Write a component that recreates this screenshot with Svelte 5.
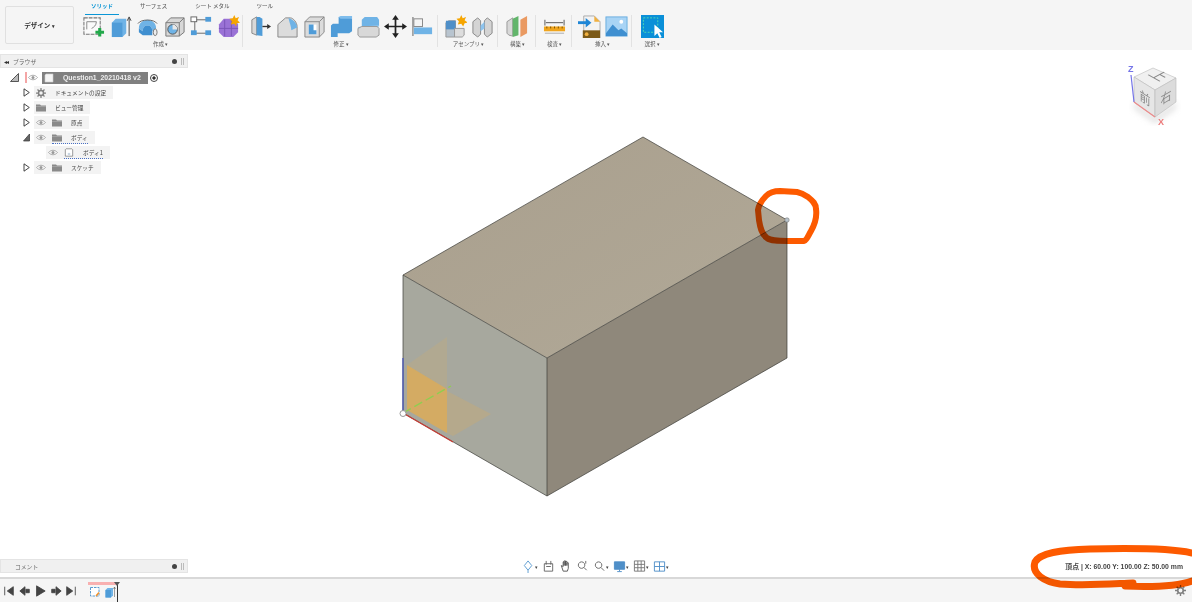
<script lang="ts">
	// 24x24 toolbar artwork, keyed by name
	const art: Record<string, string> = {
		sketch: `<path d="M2 3h17v17H2z" fill="#fafafa" stroke="#777" stroke-width="1.1" stroke-dasharray="4 1"/><path d="M5 15V7h10c0 4-3 6-5 7" fill="none" stroke="#888"/><path d="M14 18h9M18.500 13.500v9" stroke="#22a84a" stroke-width="3.200"/>`,
		extrude: `<path d="M3 8l4-4h11v15l-4 4H3z" fill="#6fb3e6"/><path d="M3 8h11v15H3z" fill="#4f9cd8"/><path d="M21 22V3M19 6l2-4 2 4" fill="none" stroke="#444" stroke-width="1"/>`,
		revolve: `<path d="M3 14c0-6 5-9 9-9s9 3 9 9l-4 3c0-4-2-6-5-6s-5 2-5 6z" fill="#6fb3e6"/><path d="M3 14l4 3v4l-4-3zM7 17c0-4 2-6 5-6s5 2 5 6v4H7z" fill="#3f8fd0"/><path d="M2 9c3-5 17-5 20 0" fill="none" stroke="#666"/><ellipse cx="20" cy="18" rx="2" ry="3.500" fill="#eee" stroke="#777"/>`,
		hole: `<path d="M3 8l5-5h14v15l-5 4H3z" fill="#d8d8d8" stroke="#777"/><path d="M3 8h14v14M17 8l5-5" fill="none" stroke="#777"/><circle cx="10" cy="15" r="5" fill="#6fb3e6" stroke="#555"/><path d="M10 15V10a5 5 0 0 1 5 5z" fill="#e8e8e8"/>`,
		pattern: `<path d="M5 5h14M5 5v14M5 19h14" stroke="#666"/><rect x="1" y="2" width="6" height="5" fill="#fff" stroke="#666"/><rect x="16" y="2" width="6" height="5" fill="#4f9cd8"/><rect x="1" y="16" width="6" height="5" fill="#4f9cd8"/><rect x="16" y="16" width="6" height="5" fill="#4f9cd8"/>`,
		form: `<path d="M2 10l5-6h12l3 6v8l-5 5H7l-5-5z" fill="#9a72d6"/><path d="M8 5v17M15 5v17M2 14h20" stroke="#7a55b8"/><path d="M18 0l1.500 3.500L23 2l-1.500 3.500L24 8l-3.500.5L20 12l-2-3-3.500 1 1-3.500L13 4l3.500-.5z" fill="#f6a500"/>`,
		press: `<path d="M3 5l5-3v19l-5-2z" fill="#d8d8d8" stroke="#888"/><path d="M8 2h3l3 2v18l-6-1z" fill="#4f9cd8"/><path d="M14 12h7" stroke="#333" stroke-width="1.400"/><path d="M19 9.500l4 2.500-4 2.500z" fill="#333"/>`,
		fillet: `<path d="M2 10l8-7h5c3 0 7 5 7 9v11H2z" fill="#dcdcdc" stroke="#888"/><path d="M13 3c4 1 9 5 9 10l-6 3c0-4-2-8-3-13z" fill="#6fb3e6"/>`,
		chamfer: `<path d="M2 7l5-5h15v16l-5 5H2z" fill="#dcdcdc" stroke="#888"/><path d="M2 7h15v16M17 7l5-5" fill="none" stroke="#888"/><path d="M6 10h8v10H6z" fill="#fff"/><path d="M6 10h5v6h3v4H6z" fill="#4f9cd8"/>`,
		combine: `<path d="M9 2h12l2 2v13l-3 2H8v4H1V11l2-2h6z" fill="#4f9cd8"/><path d="M9 2l2-1h12v3H11z" fill="#7fbdec"/>`,
		offset: `<path d="M5 5l3-3h13l2 3v6l-2 3H5z" fill="#6fb3e6"/><path d="M1 13l22-2" stroke="#8ec4ee"/><path d="M1 14l4-2h16l2 2v7l-3 2H3l-2-2z" fill="#d8d8d8" stroke="#999"/>`,
		move: `<path d="M12 2v20M2 12h20" stroke="#222" stroke-width="1.800"/><path d="M12 0l3.500 5h-7zM12 24l3.500-5h-7zM0 12l5-3.500v7zM24 12l-5-3.500v7z" fill="#222"/>`,
		align: `<path d="M2 2v20" stroke="#888" stroke-width="1.400"/><rect x="3" y="4" width="9" height="8" fill="#f4f4f4" stroke="#888"/><rect x="3" y="13" width="19" height="7" fill="#6fb3e6"/>`,
		component: `<path d="M2 8l3-2h7v8H2zM2 14h9v9H2z" fill="#b8c4cf" stroke="#999"/><path d="M2 6h10v9H2z" fill="#4f8fc8"/><path d="M11 14h10v7l-2 2h-8z" fill="#ddd" stroke="#999"/><path d="M18 0l1.500 3.500L23 2l-1.500 3.500L25 8l-3.500.5L20 12l-2-3-3.500 1 1-3.500L13 4l3.500-.5z" fill="#f6a500"/>`,
		joint: `<path d="M2 7l5-4 3 3v14l-3 3-5-4z" fill="#d4d4d4" stroke="#888"/><path d="M14 6l3-3 5 4v12l-5 4-3-3z" fill="#d4d4d4" stroke="#888"/><path d="M10 11l4-4v7l-4 3z" fill="#8ec4ee"/>`,
		plane: `<path d="M1 7l6-4v19l-4-1-2-2z" fill="#d8d8d8" stroke="#999"/><path d="M7 4l6-3v20l-6 2z" fill="#62b56b"/><path d="M15 5l7-4v18l-7 4z" fill="#ea9a62"/>`,
		measure: `<path d="M2 5v6M22 5v6M3 8h18" stroke="#555"/><path d="M1 12h22v5H1z" fill="#f0a51d"/><path d="M4 12v2M8 12v2M12 12v2M16 12v2M20 12v2" stroke="#7a5200"/><path d="M2 19h20" stroke="#aaa"/>`,
		svg: `<path d="M6 1h11l6 6v17H6z" fill="#f3f3f3" stroke="#aaa"/><path d="M17 1l6 6h-6z" fill="#f0b040"/><path d="M0 8h9" stroke="#1f86d6" stroke-width="3"/><path d="M8 3l6 5-6 5z" fill="#1f86d6"/><rect x="5" y="16" width="18" height="8" fill="#7c5a18"/><circle cx="9" cy="20" r="2" fill="#f0b040"/>`,
		picture: `<rect x="1" y="2" width="22" height="20" fill="#a9d4f5" stroke="#6aaedf"/><circle cx="17" cy="7" r="2" fill="#fff"/><path d="M1 19l7-9 6 6 3-2 6 5v3H1z" fill="#3f8fd0"/>`,
		select: `<rect x="0" y="0" width="24" height="24" fill="#0a8fd8"/><rect x="2.500" y="3" width="15" height="15" fill="none" stroke="#4fd8b0" stroke-dasharray="2 1.500"/><path d="M14 10v12l3-3 2.500 5 2-1-2.500-5h4z" fill="#fff"/>`,
	};

	const tabs = ['ソリッド', 'サーフェス', 'シート メタル', 'ツール'];

	const groups = [
		{ label: '作成', width: 164, icons: ['sketch', 'extrude', 'revolve', 'hole', 'pattern', 'form'] },
		{ label: '修正', width: 193, icons: ['press', 'fillet', 'chamfer', 'combine', 'offset', 'move', 'align'] },
		{ label: 'アセンブリ', width: 58, icons: ['component', 'joint'] },
		{ label: '構築', width: 36, icons: ['plane'] },
		{ label: '検査', width: 34, icons: ['measure'] },
		{ label: '挿入', width: 58, icons: ['svg', 'picture'] },
		{ label: '選択', width: 36, icons: ['select'] },
	];

	const tree = [
		{ level: 1, tri: 'open', eye: false, icon: 'gear', label: 'ドキュメントの設定' },
		{ level: 1, tri: 'closed', eye: false, icon: 'folder', label: 'ビュー管理' },
		{ level: 1, tri: 'closed', eye: true, icon: 'folder', label: '原点' },
		{ level: 1, tri: 'down', eye: true, icon: 'folder', label: 'ボディ', warn: true },
		{ level: 2, tri: '', eye: true, icon: 'body', label: 'ボディ1', warn: true },
		{ level: 1, tri: 'closed', eye: true, icon: 'folder', label: 'スケッチ' },
	];

	const transport = [
		'M2 2v10M12 2L5 7l7 5z',
		'M7 2L1 7l6 5zM8 5h4v4H8z',
		'M3 1l10 6-10 6z',
		'M7 2l6 5-6 5zM2 5h4v4H2z',
		'M12 2v10M2 2l7 5-7 5z',
	];

	const navTools = [
		{ arrow: true, path: 'M6 1l4 5-4 5-4-5zM6 11v3', color: '#5a9ad0' },
		{ arrow: false, path: 'M2 4h9v8H2zM4 1v4M9 1v4M4 7h5', color: '#666' },
		{ arrow: false, path: 'M4 12L2 6l2 1V2l1 0v4V1h1.500v5V1.500H8V6V3h1.500v6l-1 3z', color: '#555' },
		{ arrow: false, path: 'M5.500 2a3.500 3.500 0 1 0 .01 0M8 8l3 3M10 1v3', color: '#666' },
		{ arrow: true, path: 'M5.500 2a3.500 3.500 0 1 0 .01 0M8 8l3.500 3.500', color: '#666' },
		{ arrow: true, path: 'M1 2h11v8H1zM6.500 10v2M4 12.500h5', color: '#4f8fc8', fill: true },
		{ arrow: true, path: 'M1 1h11v11H1zM1 4.700h11M1 8.300h11M4.700 1v11M8.300 1v11', color: '#777' },
		{ arrow: true, path: 'M1 2h11v10H1zM6.500 2v10M1 7h11', color: '#4f8fc8' },
	];
</script>

{#snippet eye()}
	<svg class="eye" viewBox="0 0 10 7"><path d="M.5 3.500C3 .5 7 .5 9.500 3.500 7 6.500 3 6.500.5 3.500z" fill="none" stroke="#999" stroke-width=".8" /><circle cx="5" cy="3.500" r="1.500" fill="#999" /></svg>
{/snippet}

{#snippet gear(size: number)}
	<svg style:width="{size}px" style:height="{size}px" viewBox="0 0 12 12"><circle cx="6" cy="6" r="3" fill="none" stroke="#808080" stroke-width="1.800" /><path d="M6 0v2.500M6 9.500V12M0 6h2.500M9.500 6H12M1.800 1.800l1.800 1.800M8.400 8.400l1.800 1.800M10.200 1.800L8.400 3.600M3.600 8.400l-1.800 1.800" stroke="#808080" stroke-width="1.500" /></svg>
{/snippet}

<div class="app">
	<header class="toolbar">
		<button class="design">デザイン <span class="caret">▾</span></button>
		<div class="tools">
			<nav class="tabs">
				{#each tabs as tab, i}
					<span class="tab" class:active={i === 0}>{tab}</span>
				{/each}
			</nav>
			<div class="groups">
				{#each groups as g, i}
					<div class="group" class:divided={i < groups.length - 1} style:width="{g.width}px">
						<div class="icons">
							{#each g.icons as name}
								<svg class="tool" viewBox="0 0 24 24">{@html art[name]}</svg>
							{/each}
						</div>
						<div class="group-label">{g.label} <span class="caret">▾</span></div>
					</div>
				{/each}
			</div>
		</div>
	</header>

	<main class="viewport">
		<svg class="model" viewBox="0 0 1192 527">
			<defs>
				<linearGradient id="top" x1="0" y1="0" x2="1" y2="1">
					<stop offset="0" stop-color="#a99f8d" />
					<stop offset="1" stop-color="#b1a998" />
				</linearGradient>
				<filter id="soft"><feGaussianBlur stdDeviation="3" /></filter>
			</defs>
			<g transform="translate(0 -50)" stroke-linejoin="round">
				<path d="M643 137L787 220 547 358 403 275z" fill="url(#top)" />
				<path d="M403 275L547 358V496L403 413z" fill="#a7a89e" />
				<path d="M547 358L787 220V358L547 496z" fill="#8f887b" />
				<path d="M407 365L447 337V389z" fill="#d7ab63" opacity=".22" />
				<path d="M447 391L491 414 453 436 447 433z" fill="#d7ab63" opacity=".3" />
				<path d="M407 365L447 389V433L407 410z" fill="#dcab58" opacity=".85" />
				<path d="M643 137L787 220 547 358 403 275zM547 358V496M403 275V413L547 496 787 358V220" fill="none" stroke="#3c3c38" stroke-width=".7" />
				<path d="M403 358V413" stroke="#5560b8" stroke-width="1.500" />
				<path d="M403 413L451 386" stroke="#8fce50" stroke-width="1.400" stroke-dasharray="9 4" />
				<path d="M403 413L453 442" stroke="#c83c34" stroke-width="1.300" />
				<circle cx="403" cy="413.500" r="3" fill="#fff" stroke="#999" />
				<circle cx="787" cy="220" r="2.200" fill="#b8c4cc" stroke="#777" stroke-width=".6" />

				<!-- view cube -->
				<path d="M1134 102L1155 117 1176 102 1176 108 1155 123 1134 108z" fill="#bbb" opacity=".5" filter="url(#soft)" />
				<path d="M1153 68L1176 78 1155 90 1134 77z" fill="#f0f0f0" stroke="#bbb" stroke-width=".6" />
				<path d="M1134 77L1155 90V117L1134 102z" fill="#e6e6e6" stroke="#bbb" stroke-width=".6" />
				<path d="M1155 90L1176 78V102L1155 117z" fill="#dcdcdc" stroke="#bbb" stroke-width=".6" />
				<path d="M1131 75L1134 102" stroke="#7474e8" stroke-width="1.200" />
				<path d="M1134 102L1155 117" stroke="#ec8a8a" stroke-width="1.200" />
				<text class="cube" transform="matrix(1 .55 -1 .55 1154 78)" x="0" y="0" text-anchor="middle">上</text>
				<text class="cube" transform="matrix(.85 .55 0 1 1145 103)" text-anchor="middle">前</text>
				<text class="cube" transform="matrix(.85 -.5 0 1 1166 102)" text-anchor="middle">右</text>
				<text class="axis z" x="1128" y="72">Z</text>
				<text class="axis x" x="1158" y="125">X</text>
			</g>
		</svg>

		<div class="left">
			<section class="browser">
				<div class="panel-head">
					<span class="rewind">◂◂</span><span class="panel-title">ブラウザ</span>
					<span class="dot"></span><span class="grip"></span>
				</div>
				<div class="tree">
					<div class="row root">
						<svg class="tri-root" viewBox="0 0 9 9"><path d="M8.500.5V8.500H.5z" fill="#bbb" stroke="#333" stroke-width=".8" /></svg>
						<span class="pink"></span>
						<span class="pill bare">{@render eye()}</span>
						<span class="doc-name">
							<svg class="doc" viewBox="0 0 10 10"><path d="M2 1h7v8H1V2z" fill="#f4f4f4" stroke="#ccc" stroke-width=".6" /></svg>
							Question1_20210418 v2
						</span>
						<span class="radio"></span>
					</div>
					{#each tree as item}
						<div class="row" class:l1={item.level === 1} class:l2={item.level === 2}>
							{#if item.tri === 'down'}
								<svg class="tri" viewBox="0 0 7 8"><path d="M6.500.5V7.500H.5z" fill="#666" stroke="#333" stroke-width=".7" /></svg>
							{:else if item.tri}
								<svg class="tri" viewBox="0 0 7 9"><path d="M1 .8L6.300 4.500 1 8.200z" fill="#fff" stroke="#333" stroke-width=".9" /></svg>
							{/if}
							<span class="pill">
								{#if item.eye}{@render eye()}{/if}
								<span class="entry" class:warn={item.warn}>
									{#if item.icon === 'gear'}
										{@render gear(10)}
									{:else if item.icon === 'folder'}
										<svg class="folder" viewBox="0 0 10 8"><path d="M0 1h4l1 1h5v6H0z" fill="#8a8a8a" /><path d="M0 3h10" stroke="#bbb" stroke-width=".5" /></svg>
									{:else}
										<svg class="folder" viewBox="0 0 11 11"><path d="M2 1h7l1 1v8H1V2z" fill="#fff" stroke="#555" stroke-width=".7" /><path d="M4 6h3v3H4z" fill="#c9d6e2" /></svg>
									{/if}
									<span class="label">{item.label}</span>
								</span>
							</span>
						</div>
					{/each}
				</div>
			</section>

			<section class="panel-head comments">
				<span class="panel-title">コメント</span>
				<span class="dot"></span><span class="grip"></span>
			</section>
		</div>

		<div class="nav-tools">
			{#each navTools as t}
				<span class="nav-tool">
					<svg viewBox="0 0 13 14"><path d={t.path} fill={t.fill ? t.color : 'none'} stroke={t.color} stroke-width="1" /></svg>
					{#if t.arrow}<span class="mini">▾</span>{/if}
				</span>
			{/each}
		</div>

		<div class="status"><span class="status-name">頂点</span> | X: 60.00 Y: 100.00 Z: 50.00 mm</div>
	</main>

	<footer class="timeline">
		<div class="transport">
			{#each transport as d}
				<svg viewBox="0 0 14 14"><path {d} fill="#444" stroke="#444" stroke-width="1" /></svg>
			{/each}
		</div>
		<div class="features">
			<span class="rollback"></span>
			<svg class="feature" viewBox="0 0 24 24"><path d="M3 3h17v17H3z" fill="#fff" stroke="#5a9ad0" stroke-width="2" stroke-dasharray="5 2" /><path d="M14 20l6-7" stroke="#f0902a" stroke-width="3" /></svg>
			<svg class="feature" viewBox="0 0 24 24">{@html art.extrude}</svg>
			<span class="marker"></span>
		</div>
		<span class="settings">{@render gear(11)}</span>
	</footer>

	<svg class="marks" viewBox="0 0 1200 602">
		<path class="ring" d="M758 210C759 203 763 199 766 196 770 192 775 191 780 191L797 192C802 193 805 195 808 197 813 201 816 204 816 209 817 216 815 224 811 231 808 236 807 240 804 241L787 241C778 241 771 241 767 238 761 234 760 226 759 220z" />
		<path class="scrawl" d="M1192 553C1170 548 1130 548 1090 549 1060 550 1040 553 1035 562 1031 574 1045 582 1060 584 1085 586 1110 584 1133 583L1125 586C1150 587 1175 587 1192 581" />
	</svg>
</div>

<style>
	:global(body) {
		background: #fff;
	}

	.app {
		position: relative;
		width: 1192px;
		height: 602px;
		display: flex;
		flex-direction: column;
		overflow: hidden;
		font-family: 'Noto Sans CJK JP', 'Liberation Sans', sans-serif;
		color: #555;
	}

	.toolbar {
		height: 50px;
		flex: none;
		display: flex;
		background: #f5f5f5;
	}

	.design {
		width: 69px;
		height: 38px;
		margin: 6px 5px 0 5px;
		padding: 0;
		background: #f5f5f5;
		border: 1px solid #e0e0e0;
		border-radius: 2px;
		font: 700 6.500px 'Noto Sans CJK JP', sans-serif;
		color: #333;
	}

	.caret {
		font-size: 5px;
	}

	.tools {
		display: flex;
		flex-direction: column;
	}

	.tabs {
		height: 15px;
		display: flex;
		padding-left: 6px;
	}

	.tab {
		padding: 0 3px;
		margin-right: 18px;
		font-size: 5.500px;
		line-height: 12px;
		font-weight: 500;
		color: #666;
		white-space: pre;
	}

	.tab:nth-child(2) {
		margin-right: 22px;
	}

	.tab:nth-child(3) {
		margin-right: 21px;
	}

	.tab.active {
		width: 34px;
		box-sizing: border-box;
		padding: 0 0 0 6px;
		margin-right: 18px;
		color: #0a96d6;
		font-weight: 700;
		border-bottom: 1px solid #0a96d6;
	}

	.groups {
		display: flex;
		gap: 2px;
		height: 35px;
	}

	.group {
		box-sizing: border-box;
		display: flex;
		flex-direction: column;
		align-items: center;
		height: 32px;
	}

	.group.divided {
		border-right: 1px solid #e2e2e2;
	}

	.icons {
		display: flex;
		height: 24px;
		align-items: center;
	}

	.tool {
		width: 23px;
		height: 23px;
		margin: 0 2px;
	}

	.group-label {
		font-size: 5.500px;
		line-height: 12px;
		color: #555;
		white-space: nowrap;
	}

	.viewport {
		position: relative;
		flex: 1;
		min-height: 0;
		background: #fff;
	}

	.model {
		position: absolute;
		inset: 0;
		width: 100%;
		height: 100%;
	}

	.cube {
		font-size: 13px;
		fill: #888;
	}

	.axis {
		font: 700 9px 'Liberation Sans', sans-serif;
	}

	.axis.z {
		fill: #7474e8;
	}

	.axis.x {
		fill: #ec7a7a;
	}

	.left {
		position: relative;
		width: 188px;
		height: 100%;
		display: flex;
		flex-direction: column;
		justify-content: space-between;
		padding: 4px 0 4px;
		box-sizing: border-box;
	}

	.panel-head {
		height: 14px;
		display: flex;
		align-items: center;
		background: #f0f0f0;
		border: 1px solid #e4e4e4;
		box-sizing: border-box;
		padding: 0 2px 0 3px;
		font-size: 5.800px;
		color: #666;
	}

	.comments {
		padding-left: 14px;
	}

	.rewind {
		font-size: 6px;
		color: #333;
		margin-right: 6px;
		letter-spacing: -1.500px;
	}

	.panel-title {
		flex: 1;
	}

	.dot {
		width: 5px;
		height: 5px;
		border-radius: 50%;
		background: #444;
	}

	.grip {
		width: 1px;
		height: 7px;
		margin: 0 1px 0 4px;
		border: solid #bbb;
		border-width: 0 1px;
	}

	.tree {
		padding-top: 2px;
	}

	.row {
		height: 15px;
		display: flex;
		align-items: center;
		font-size: 5.700px;
		color: #444;
		white-space: nowrap;
	}

	.row.root {
		padding-left: 10px;
	}

	.row.l1 {
		padding-left: 23px;
	}

	.row.l2 {
		padding-left: 46px;
	}

	.tri-root {
		width: 9px;
		height: 9px;
		margin-right: 6px;
	}

	.tri {
		width: 7px;
		height: 9px;
		margin-right: 4px;
	}

	.pink {
		width: 2px;
		height: 11px;
		background: #f4a6a6;
		margin-right: 1px;
	}

	.pill {
		height: 13px;
		display: flex;
		align-items: center;
		gap: 6px;
		background: #f3f3f3;
		padding: 0 7px 0 2px;
	}

	.pill.bare {
		padding: 0 4px 0 0;
		gap: 0;
		background: none;
	}

	.entry {
		display: flex;
		align-items: center;
		gap: 9px;
		height: 12px;
	}

	.entry.warn {
		border-bottom: 1px dotted #4a70c4;
	}

	.eye {
		width: 10px;
		height: 7px;
	}

	.folder {
		width: 10px;
		height: 9px;
	}

	.doc-name {
		width: 106px;
		height: 12px;
		box-sizing: border-box;
		display: flex;
		align-items: center;
		gap: 9px;
		padding-left: 2px;
		background: #808080;
		color: #eee;
		font: 700 6.900px 'Liberation Sans', sans-serif;
		white-space: nowrap;
	}

	.doc {
		width: 10px;
		height: 10px;
		flex: none;
	}

	.radio {
		width: 8px;
		height: 8px;
		margin-left: 2px;
		box-sizing: border-box;
		border: 1px solid #444;
		border-radius: 50%;
		background: radial-gradient(#333 0 1.500px, #fff 1.700px);
	}

	.nav-tools {
		position: absolute;
		left: 522px;
		top: 510px;
		display: flex;
		align-items: center;
		gap: 4px;
	}

	.nav-tool {
		display: flex;
		align-items: center;
	}

	.nav-tool svg {
		width: 13px;
		height: 13px;
	}

	.mini {
		font-size: 5px;
		color: #444;
	}

	.status {
		position: absolute;
		right: 9px;
		bottom: 6px;
		font: 700 6.850px 'Liberation Sans', 'Noto Sans CJK JP', sans-serif;
		color: #444;
		white-space: nowrap;
	}

	.status-name {
		font-family: 'Noto Sans CJK JP', sans-serif;
	}

	.timeline {
		height: 25px;
		flex: none;
		box-sizing: border-box;
		display: flex;
		align-items: center;
		background: #f5f5f5;
		border-top: 2px solid #d8d8d8;
		padding: 0 6px 0 3px;
	}

	.transport {
		display: flex;
		gap: 3.500px;
	}

	.transport svg {
		width: 12px;
		height: 12px;
	}

	.features {
		position: relative;
		display: flex;
		align-items: center;
		gap: 3px;
		height: 23px;
		margin-left: 11px;
		padding: 3px 0 0 1px;
		box-sizing: border-box;
		width: 28px;
	}

	.feature {
		width: 12px;
		height: 12px;
	}

	.rollback {
		position: absolute;
		top: 3px;
		left: 0;
		right: 0;
		height: 3px;
		background: #f8b0b0;
	}

	.marker {
		position: absolute;
		left: 29px;
		top: 3px;
		bottom: 0;
		width: 1px;
		background: #333;
	}

	.marker::before {
		content: '';
		position: absolute;
		left: -3px;
		top: 0;
		border: 3.500px solid transparent;
		border-top: 4px solid #555;
	}

	.settings {
		margin-left: auto;
		display: flex;
	}

	.marks {
		position: absolute;
		inset: 0;
		width: 1200px;
		height: 602px;
		pointer-events: none;
		mix-blend-mode: multiply;
		fill: none;
		stroke: #fd5a00;
		stroke-linecap: round;
		stroke-linejoin: round;
	}

	.ring {
		stroke-width: 6;
	}

	.scrawl {
		stroke-width: 7;
	}
</style>
